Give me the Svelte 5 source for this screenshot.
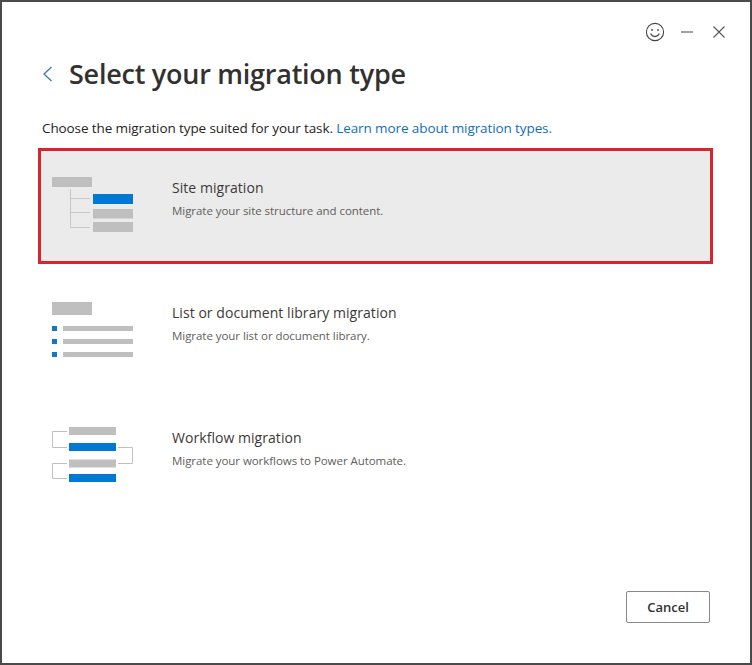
<script>
  const types = [
    { id: "site", title: "Site migration", desc: "Migrate your site structure and content.", selected: true },
    { id: "list", title: "List or document library migration", desc: "Migrate your list or document library.", selected: false },
    { id: "workflow", title: "Workflow migration", desc: "Migrate your workflows to Power Automate.", selected: false }
  ];
</script>

<div class="window">
  <div class="titlebar">
    <!-- feedback smiley -->
    <svg class="ctl smiley" width="20" height="20" viewBox="0 0 20 20" fill="none" stroke="#444" stroke-width="1.1">
      <circle cx="10" cy="10" r="8.6" />
      <circle cx="7" cy="8" r="0.9" fill="#444" stroke="none" />
      <circle cx="13" cy="8" r="0.9" fill="#444" stroke="none" />
      <path d="M5.6 11.6c1 2 2.6 3 4.4 3s3.4-1 4.4-3" />
    </svg>
    <svg class="ctl min" width="14" height="14" viewBox="0 0 14 14" stroke="#555" stroke-width="1.1">
      <path d="M1 7h12" />
    </svg>
    <svg class="ctl" width="14" height="14" viewBox="0 0 14 14" stroke="#555" stroke-width="1.1">
      <path d="M1.5 1.5l11 11M12.5 1.5l-11 11" />
    </svg>
  </div>

  <div class="heading">
    <svg width="11" height="16" viewBox="0 0 11 16" fill="none" stroke="#3f76b5" stroke-width="1.3">
      <path d="M9.500 1L2 8l7.500 7" />
    </svg>
    <h1>Select your migration type</h1>
  </div>

  <p class="intro">Choose the migration type suited for your task. <span class="link">Learn more about migration types.</span></p>

  <div class="options">
    {#each types as t}
      <div class="option" class:selected={t.selected}>
        <div class="pic">
          {#if t.id == "site"}
            <svg width="82" height="56" viewBox="0 0 82 56">
              <rect x="0" y="0" width="40" height="10" fill="#bfbfbf" />
              <path d="M18.500 12v38M18 21.500h20M18 35.500h20M18 50.500h20" stroke="#c8c8c8" fill="none" />
              <rect x="41" y="17" width="40" height="10" fill="#0078d4" />
              <rect x="41" y="32" width="40" height="9.500" fill="#bfbfbf" />
              <rect x="41" y="45" width="40" height="10" fill="#bfbfbf" />
            </svg>
          {:else if t.id == "list"}
            <svg width="82" height="56" viewBox="0 0 82 56">
              <rect x="0" y="0" width="40" height="13" fill="#bfbfbf" />
              <rect x="0" y="24" width="5" height="5" fill="#0f78c8" />
              <rect x="0" y="37" width="5" height="5" fill="#0f78c8" />
              <rect x="0" y="50" width="5" height="5" fill="#0f78c8" />
              <rect x="11" y="24" width="70" height="5" fill="#bfbfbf" />
              <rect x="11" y="37" width="70" height="5" fill="#bfbfbf" />
              <rect x="11" y="50" width="70" height="5" fill="#bfbfbf" />
            </svg>
          {:else}
            <svg width="82" height="56" viewBox="0 0 82 56">
              <rect x="17" y="0" width="47" height="8" fill="#bfbfbf" />
              <rect x="17" y="16" width="47" height="8" fill="#0078d4" />
              <rect x="17" y="32.500" width="47" height="8" fill="#bfbfbf" />
              <rect x="17" y="47" width="47" height="8" fill="#0078d4" />
              <path d="M15 4.500H0.500V20.500H15M15 36.500H0.500V51.500H15M66 20.500H80.500V36.500H66" stroke="#c0c0c0" fill="none" />
            </svg>
          {/if}
        </div>
        <div class="text">
          <div class="title">{t.title}</div>
          <div class="desc">{t.desc}</div>
        </div>
      </div>
    {/each}
  </div>

  <div class="footer">
    <button class="cancel">Cancel</button>
  </div>
</div>

<style>
  :global(body) {
    margin: 0;
    background: white;
  }

  .window {
    box-sizing: border-box;
    width: 752px;
    height: 665px;
    border: 2px solid #4a4a4a;
    background: white;
    font-family: "Open Sans", "Liberation Sans", sans-serif;
    color: #323130;
    display: flex;
    flex-direction: column;
  }

  .titlebar {
    display: flex;
    justify-content: flex-end;
    align-items: center;
    gap: 18px;
    height: 18px;
    padding: 21px 24px 0 0;
  }

  .smiley {
    margin-right: -3px;
  }

  .ctl {
    flex: none;
  }

  .heading {
    display: flex;
    align-items: center;
    gap: 16px;
    padding: 13px 0 0 40px;
    height: 40px;
  }

  h1 {
    margin: 0;
    font-size: 27px;
    font-weight: 600;
    line-height: 40px;
    letter-spacing: -0.25px;
  }

  .intro {
    margin: 25px 0 0 40px;
    font-size: 13.500px;
    line-height: 18px;
    color: #252423;
    letter-spacing: -0.1px;
  }

  .link {
    color: #106ebe;
  }

  .options {
    display: flex;
    flex-direction: column;
    gap: 9px;
    margin: 11px 37px 0 36px;
  }

  .option {
    box-sizing: border-box;
    height: 116px;
    display: flex;
    padding: 26px 0 0 11px;
    border: 3px solid transparent;
  }

  .option.selected {
    border-color: #d9232e;
    background: #ebebeb;
  }

  .pic {
    width: 120px;
    flex: none;
  }

  .pic svg {
    display: block;
  }

  .text {
    padding-top: 3px;
  }

  .title {
    font-size: 14px;
    line-height: 20px;
    margin-top: -2px;
    color: #3b3a39;
    letter-spacing: 0.05px;
  }

  .desc {
    font-size: 11.500px;
    line-height: 16px;
    margin-top: 5px;
    color: #605e5c;
    letter-spacing: -0.05px;
  }

  .footer {
    margin-top: auto;
    display: flex;
    justify-content: flex-end;
    padding: 0 40px 40px 0;
  }

  .cancel {
    width: 84px;
    height: 32px;
    background: white;
    border: 1px solid #8a8886;
    border-radius: 2px;
    font-family: inherit;
    font-size: 13px;
    font-weight: 600;
    color: #323130;
    padding: 0;
  }
</style>
